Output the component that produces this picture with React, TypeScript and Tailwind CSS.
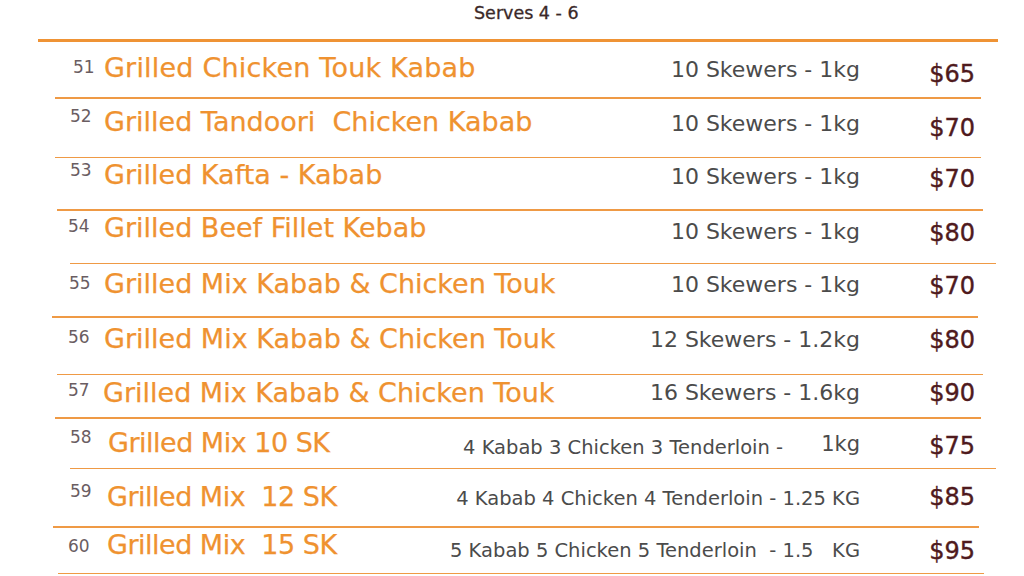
import React from "react";

interface MenuRow {
  num: string;
  name: string;
  desc: React.ReactNode;
  price: string;
  rowCls: string; // height + left padding of the row
  numCls: string;
  nameCls: string;
  descCls: string;
  priceCls: string;
  lineCls: string;
}

const rows: MenuRow[] = [
  {
    num: "51",
    name: "Grilled Chicken Touk Kabab",
    desc: "10 Skewers - 1kg",
    price: "$65",
    rowCls: "h-[55px] pl-[73px]",
    numCls: "w-[31px] mt-[17px]",
    nameCls: "mt-[12px] tracking-[0.2px]",
    descCls: "mt-[17px] text-[22px]",
    priceCls: "mt-[20px]",
    lineCls: "ml-[55px]",
  },
  {
    num: "52",
    name: "Grilled Tandoori  Chicken Kabab",
    desc: "10 Skewers - 1kg",
    price: "$70",
    rowCls: "h-[58px] pl-[70px]",
    numCls: "w-[34px] mt-[9px]",
    nameCls: "mt-[9px]",
    descCls: "mt-[14px] text-[22px]",
    priceCls: "mt-[17px]",
    lineCls: "ml-[55px]",
  },
  {
    num: "53",
    name: "Grilled Kafta - Kabab",
    desc: "10 Skewers - 1kg",
    price: "$70",
    rowCls: "h-[51px] pl-[70px]",
    numCls: "w-[34px] mt-[4px]",
    nameCls: "mt-[3px]",
    descCls: "mt-[8px] text-[22px]",
    priceCls: "mt-[9px]",
    lineCls: "ml-[57px]",
  },
  {
    num: "54",
    name: "Grilled Beef Fillet Kebab",
    desc: "10 Skewers - 1kg",
    price: "$80",
    rowCls: "h-[52px] pl-[68px]",
    numCls: "w-[36px] mt-[7px]",
    nameCls: "mt-[3px]",
    descCls: "mt-[10px] text-[22px]",
    priceCls: "mt-[10px]",
    lineCls: "ml-[70px]",
  },
  {
    num: "55",
    name: "Grilled Mix Kabab & Chicken Touk",
    desc: "10 Skewers - 1kg",
    price: "$70",
    rowCls: "h-[52px] pl-[69px]",
    numCls: "w-[35px] mt-[11px]",
    nameCls: "mt-[6px]",
    descCls: "mt-[10px] text-[22px]",
    priceCls: "mt-[10px]",
    lineCls: "ml-[52px]",
  },
  {
    num: "56",
    name: "Grilled Mix Kabab & Chicken Touk",
    desc: "12 Skewers - 1.2kg",
    price: "$80",
    rowCls: "h-[56px] pl-[68px]",
    numCls: "w-[36px] mt-[11px]",
    nameCls: "mt-[7px]",
    descCls: "mt-[11px] text-[22px]",
    priceCls: "mt-[10px]",
    lineCls: "ml-[57px]",
  },
  {
    num: "57",
    name: "Grilled Mix Kabab & Chicken Touk",
    desc: "16 Skewers - 1.6kg",
    price: "$90",
    rowCls: "h-[42px] pl-[68px]",
    numCls: "w-[35px] mt-[7px]",
    nameCls: "mt-[4px]",
    descCls: "mt-[7px] text-[22px]",
    priceCls: "mt-[6px]",
    lineCls: "ml-[55px]",
  },
  {
    num: "58",
    name: "Grilled Mix 10 SK",
    desc: (
      <>
        4 Kabab 3 Chicken 3 Tenderloin -
        <span className="ml-[38px] relative -top-[3px] text-[21px]">1kg</span>
      </>
    ),
    price: "$75",
    rowCls: "h-[49px] pl-[70px]",
    numCls: "w-[38px] mt-[10px]",
    nameCls: "mt-[10px] tracking-[-0.5px]",
    descCls: "mt-[18px] text-[19.5px]",
    priceCls: "mt-[15px]",
    lineCls: "ml-[70px]",
  },
  {
    num: "59",
    name: "Grilled Mix  12 SK",
    desc: "4 Kabab 4 Chicken 4 Tenderloin - 1.25 KG",
    price: "$85",
    rowCls: "h-[57px] pl-[70px]",
    numCls: "w-[37px] mt-[14px]",
    nameCls: "mt-[14px] tracking-[-0.5px]",
    descCls: "mt-[20px] text-[19.5px]",
    priceCls: "mt-[16px]",
    lineCls: "ml-[53px]",
  },
  {
    num: "60",
    name: "Grilled Mix  15 SK",
    desc: "5 Kabab 5 Chicken 5 Tenderloin  - 1.5   KG",
    price: "$95",
    rowCls: "h-[45px] pl-[68px]",
    numCls: "w-[39px] mt-[10px]",
    nameCls: "mt-[3px] tracking-[-0.5px]",
    descCls: "mt-[13px] text-[19.5px]",
    priceCls: "mt-[11px]",
    lineCls: "ml-[58px]",
  },
];

const App = () => {
  return (
    <div className="w-[1024px] h-[576px] overflow-hidden bg-white font-['DejaVu_Sans',sans-serif]">
      {/* header */}
      <div className="h-[39px] pl-[474px] pt-[2px]">
        <span className="text-[17.5px] leading-none text-[#3a2828] [-webkit-text-stroke:0.3px_#3a2828]">
          Serves 4 - 6
        </span>
      </div>
      <div className="ml-[38px] w-[960px] h-[3px] bg-[#ef9335]"></div>

      {rows.map((row) => (
        <div key={row.num}>
          <div className={`flex items-start pr-[49px] ${row.rowCls}`}>
            <span className={`shrink-0 text-[17px] leading-none text-[#6a5d62] ${row.numCls}`}>{row.num}</span>
            <span
              className={`flex-1 whitespace-pre text-[27px] leading-none text-[#ef9230] [-webkit-text-stroke:0.25px_#ef9230] ${row.nameCls}`}
            >
              {row.name}
            </span>
            <span className={`whitespace-pre text-right leading-none text-[#4b4b4b] ${row.descCls}`}>{row.desc}</span>
            <span
              className={`w-[115px] shrink-0 text-right text-[24px] leading-none text-[#4f1a1d] [-webkit-text-stroke:0.4px_#4f1a1d] ${row.priceCls}`}
            >
              {row.price}
            </span>
          </div>
          <div className={`w-[926px] h-[1.5px] bg-[#ef9a45] ${row.lineCls}`}></div>
        </div>
      ))}
    </div>
  );
};

export default App;
